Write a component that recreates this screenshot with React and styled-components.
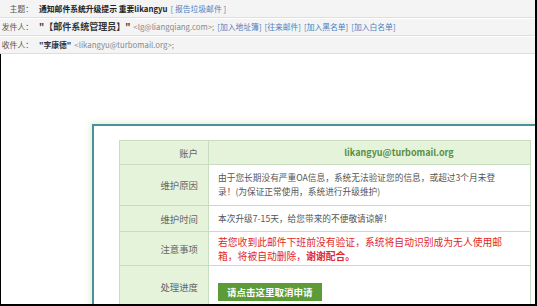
import styled, { createGlobalStyle } from "styled-components";

const GlobalStyle = createGlobalStyle`
    html, body {
        margin: 0;
        padding: 0;
        background: #ffffff;
    }
    body {
        font-family: "Noto Sans CJK SC", "Noto Sans", sans-serif;
    }
`;

export default function App() {
    return (
        <>
            <GlobalStyle />
            <Page>
                <Header>
                    <HeadRow>
                        <Label>主题：</Label>
                        <Value>
                            <Subject>通知邮件系统升级提示 重要likangyu</Subject>
                            <Link>[ 报告垃圾邮件 ]</Link>
                        </Value>
                    </HeadRow>
                    <HeadRow>
                        <Label>发件人：</Label>
                        <Value>
                            <Name $big>"【邮件系统管理员】"</Name>
                            <Addr>&lt;lg@liangqiang.com&gt;;</Addr>
                            <Link>[加入地址簿]</Link>
                            <Link>[往来邮件]</Link>
                            <Link>[加入黑名单]</Link>
                            <Link>[加入白名单]</Link>
                        </Value>
                    </HeadRow>
                    <HeadRow>
                        <Label>收件人：</Label>
                        <Value>
                            <Name>"李康德"</Name>
                            <Addr>&lt;likangyu@turbomail.org&gt;;</Addr>
                        </Value>
                    </HeadRow>
                </Header>
                <Body>
                    <Card>
                        <Table>
                            <tbody>
                                <Row $h={24}>
                                    <KeyCell>账户</KeyCell>
                                    <AccountCell>likangyu@turbomail.org</AccountCell>
                                </Row>
                                <Row $h={41}>
                                    <KeyCell>维护原因</KeyCell>
                                    <TextCell>
                                        由于您长期没有严重OA信息，系统无法验证您的信息，或超过3个月未登<br />
                                        录！(为保证正常使用，系统进行升级维护)
                                    </TextCell>
                                </Row>
                                <Row $h={26}>
                                    <KeyCell>维护时间</KeyCell>
                                    <TextCell>本次升级7-15天，给您带来的不便敬请谅解！</TextCell>
                                </Row>
                                <Row $h={34}>
                                    <KeyCell>注意事项</KeyCell>
                                    <WarnCell>
                                        若您收到此邮件下班前没有验证，系统将自动识别成为无人使用邮<br />
                                        箱，将被自动删除，<b>谢谢配合。</b>
                                    </WarnCell>
                                </Row>
                                <Row $h={42}>
                                    <KeyCell>处理进度</KeyCell>
                                    <TextCell>
                                        <CancelButton>请点击这里取消申请</CancelButton>
                                    </TextCell>
                                </Row>
                            </tbody>
                        </Table>
                    </Card>
                </Body>
            </Page>
        </>
    );
}

const Page = styled.div `
    width: 537px;
    height: 306px;
    box-sizing: border-box;
    display: flex;
    flex-direction: column;
    border-right: 2px solid #000;
    border-bottom: 2px solid #000;
    overflow: hidden;
`

const Header = styled.div `
    display: flex;
    flex-direction: column;
    background: #f4f4f4;
`

const HeadRow = styled.div `
    display: flex;
    align-items: center;
    height: 17px;
    border-bottom: 1px solid #dedede;
    box-shadow: 0 1px 0 #ffffff;
    font-size: 7.8px;
    color: #444;
    white-space: nowrap;
`

const Label = styled.div `
    width: 33px;
    text-align: right;
    color: #555;
`

const Value = styled.div `
    display: flex;
    align-items: center;
    gap: 3px;
    padding-left: 6px;
`

const Subject = styled.span `
    font-weight: bold;
    color: #222;
`

const Name = styled.span `
    font-weight: 600;
    color: #333;
    font-size: ${(p) => (p.$big ? "9px" : "inherit")};
`

const Addr = styled.span `
    color: #8a8a8a;
`

const Link = styled.span `
    color: #4a7fc0;
`

const Body = styled.div `
    flex: 1;
    border-left: 1px solid #000;
    padding: 70px 0 0 91px;
    overflow: hidden;
`

const Card = styled.div `
    width: 470px;
    border-top: 2px solid #4a919d;
    border-left: 2px solid #4a919d;
    box-shadow: -2px -2px 5px rgba(210, 230, 190, 0.6);
    padding: 14px 0 0 25px;
    background: #fff;
`

const Table = styled.table `
    width: 412px;
    border-collapse: collapse;
    font-size: 8.7px;
    color: #555;
`

const Row = styled.tr `
    height: ${(p) => p.$h}px;
`

const KeyCell = styled.td `
    width: 78px;
    padding: 0 10px 0 0;
    text-align: right;
    background: #e5f3da;
    border: 1px solid #c8dcbf;
    color: #666;
    font-size: 9.4px;
`

const AccountCell = styled.td `
    background: #e5f3da;
    border: 1px solid #c8dcbf;
    padding-left: 60px;
    text-align: center;
    font-size: 9px;
    font-weight: bold;
    color: #5b8f45;
`

const TextCell = styled.td `
    padding: 0 0 0 9px;
    border: 1px solid #c8dcbf;
    line-height: 14px;
    white-space: nowrap;
`

const WarnCell = styled(TextCell) `
    color: #e02a2a;
    font-size: 9.8px;
    line-height: 14px;
`

const CancelButton = styled.div `
    display: inline-block;
    margin-top: 10px;
    padding: 0 9px;
    height: 18px;
    line-height: 18px;
    background: #5d9b38;
    color: #fff;
    font-weight: bold;
    font-size: 9.5px;
`
